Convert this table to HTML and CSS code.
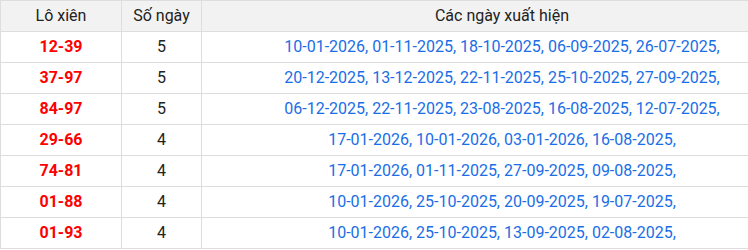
FILE: index.html
```html
<!DOCTYPE html>
<html lang="vi">
<head>
<meta charset="utf-8">
<link rel="stylesheet" href="styles.css">
</head>
<body>
<table class="tbl">
  <thead>
    <tr><th class="c1">Lô xiên</th><th class="c2">Số ngày</th><th class="c3">Các ngày xuất hiện</th></tr>
  </thead>
  <tbody>
    <tr><td class="pair">12-39</td><td class="days">5</td><td class="dates">10-01-2026, 01-11-2025, 18-10-2025, 06-09-2025, 26-07-2025,</td></tr>
    <tr><td class="pair">37-97</td><td class="days">5</td><td class="dates">20-12-2025, 13-12-2025, 22-11-2025, 25-10-2025, 27-09-2025,</td></tr>
    <tr><td class="pair">84-97</td><td class="days">5</td><td class="dates">06-12-2025, 22-11-2025, 23-08-2025, 16-08-2025, 12-07-2025,</td></tr>
    <tr><td class="pair">29-66</td><td class="days">4</td><td class="dates">17-01-2026, 10-01-2026, 03-01-2026, 16-08-2025,</td></tr>
    <tr><td class="pair">74-81</td><td class="days">4</td><td class="dates">17-01-2026, 01-11-2025, 27-09-2025, 09-08-2025,</td></tr>
    <tr><td class="pair">01-88</td><td class="days">4</td><td class="dates">10-01-2026, 25-10-2025, 20-09-2025, 19-07-2025,</td></tr>
    <tr><td class="pair">01-93</td><td class="days">4</td><td class="dates">10-01-2026, 25-10-2025, 13-09-2025, 02-08-2025,</td></tr>
  </tbody>
</table>
</body>
</html>
```
FILE: styles.css
```css
html, body {
  margin: 0;
  padding: 0;
  background: #fff;
  overflow: hidden;
}
body {
  font-family: Roboto, "Liberation Sans", sans-serif;
  font-size: 16px;
  color: #222;
}
.tbl {
  border-collapse: collapse;
  table-layout: fixed;
  width: 803px;
}
.tbl th, .tbl td {
  border: 1px solid #dddddd;
  height: 30px;
  padding: 0;
  text-align: center;
  vertical-align: middle;
  line-height: 30px;
  box-sizing: border-box;
}
.tbl th {
  background: #f2f2f2;
  font-weight: 400;
  color: #222;
}
.c1 { width: 121px; }
.c2 { width: 80px; }
.pair {
  color: #ff0000;
  font-weight: 700;
}
.days {
  color: #222;
}
.dates {
  color: #1a6ee6;
  white-space: nowrap;
}
```
